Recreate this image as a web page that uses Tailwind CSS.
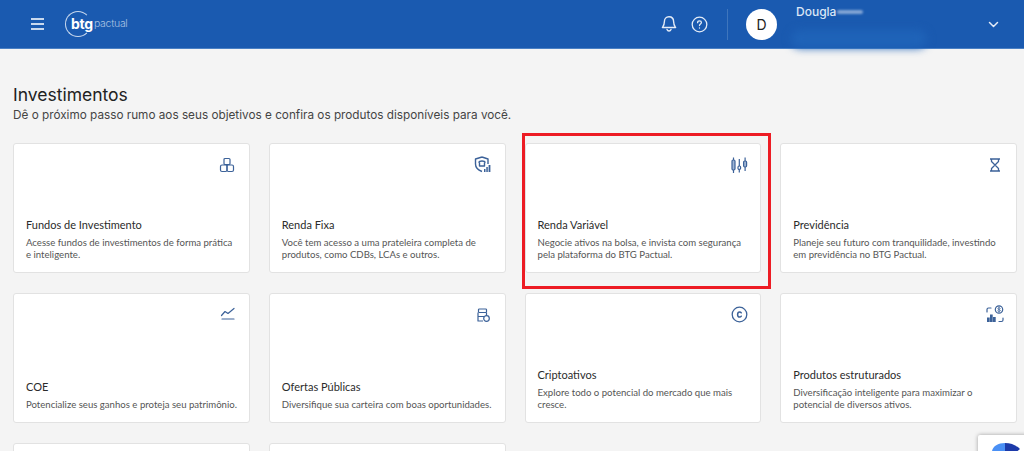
<!DOCTYPE html>
<html lang="pt-br">
<head>
  <meta charset="UTF-8" />
  <meta name="viewport" content="width=device-width, initial-scale=1.0" />
  <title>Investimentos</title>
  <script src="https://cdn.jsdelivr.net/npm/@tailwindcss/browser@4"></script>
</head>
<body class="bg-[#f4f4f4] font-['Inter',sans-serif]">
<div class="relative h-[451px] overflow-hidden">
  <!-- topo -->
  <header class="flex h-[49px] items-center border-b border-[#4a80c4] bg-[#1a5ab0] text-white">
    <button class="ml-[31px] flex w-[13px] flex-col gap-[3px]">
      <span class="h-[2px] w-[13px] bg-[#c9d9ee]"></span>
      <span class="h-[2px] w-[13px] bg-[#c9d9ee]"></span>
      <span class="h-[2px] w-[13px] bg-[#c9d9ee]"></span>
    </button>
    <div class="relative ml-[21px] flex h-[26px] w-[66px] items-center">
      <span class="size-[26px] rounded-full border border-l-[#c9d9ee] border-t-[#c9d9ee] border-b-[#c9d9ee] border-r-transparent"></span>
      <span class="absolute left-[6px] top-[4px] text-[14px] font-bold leading-[18px] tracking-[-0.3px]">btg</span>
      <span class="absolute left-[29px] top-[5px] text-[10.500px] font-light leading-[16px] tracking-[-0.3px] text-[#a9c2e2]">pactual</span>
    </div>
    <div class="ml-auto flex items-center">
      <svg class="size-[18px]" viewBox="0 0 18 18" fill="none" stroke="#e4ecf7" stroke-width="1.400" stroke-linecap="round" stroke-linejoin="round">
        <path d="M9 1.800c-3 0-4.600 2.200-4.600 4.800 0 3.400-1.300 4.800-2 5.900h13.200c-.7-1.100-2-2.500-2-5.900 0-2.600-1.600-4.800-4.600-4.800z"/>
        <path d="M7 14.500c.4 1 1.100 1.500 2 1.500s1.600-.5 2-1.500"/>
      </svg>
      <svg class="ml-[13px] size-[17px]" viewBox="0 0 17 17" fill="none" stroke="#e4ecf7" stroke-width="1.300" stroke-linecap="round">
        <circle cx="8.500" cy="8.500" r="7.300"/>
        <path d="M6.600 6.700c0-1.100.9-1.800 1.900-1.800s1.900.7 1.900 1.700c0 1.400-1.900 1.500-1.900 2.900"/>
        <path d="M8.500 12v.1"/>
      </svg>
      <span class="ml-[19px] h-[31px] w-px bg-[#3f76bd]"></span>
      <span class="ml-[18px] flex size-[31px] items-center justify-center rounded-full bg-white text-[14px] text-[#222]">D</span>
      <div class="relative ml-[19px] h-[48px] w-[131px] self-start">
        <span class="absolute left-0 top-[3px] text-[12px] font-medium leading-[17px] text-[#dbe6f5]">Dougla</span>
        <span class="absolute left-[41px] top-[10px] h-[4px] w-[26px] rounded-full bg-[#c9d9ee]/60 blur-[1px]"></span>
        <span class="absolute left-[-5px] top-[30px] h-[18px] w-[136px] rounded-full bg-[#1f63b8] blur-[4px]"></span>
      </div>
      <svg class="ml-[61px] mr-[25px] size-[11px]" viewBox="0 0 11 11" fill="none" stroke="#e4ecf7" stroke-width="1.500" stroke-linecap="round" stroke-linejoin="round">
        <path d="M1.500 3.500 5.500 7.500 9.500 3.500"/>
      </svg>
    </div>
  </header>

  <main class="pl-[13px] pr-[7px] pt-[35px]">
    <h1 class="text-[17.500px] leading-[22px] text-[#222]">Investimentos</h1>
    <p class="mt-[1px] text-[11.750px] leading-[16px] text-[#444]">Dê o próximo passo rumo aos seus objetivos e confira os produtos disponíveis para você.</p>

    <div class="mt-[20px] grid grid-cols-4 gap-x-[19px] gap-y-[20px] font-['Lato',sans-serif]">
      <!-- linha 1 -->
      <a class="flex h-[130px] flex-col rounded-[3px] border border-[#e2e2e2] bg-white px-[12px] pb-[11px]">
        <svg class="ml-auto mr-[2px] mt-[13px] size-[16px]" viewBox="0 0 16 16" fill="none" stroke="#3c6299" stroke-width="1.200" stroke-linejoin="round">
          <rect x="5" y="1.500" width="6" height="6" rx="1"/>
          <rect x="1.500" y="8" width="6.500" height="6.500" rx="1.500"/>
          <rect x="8" y="8" width="6.500" height="6.500" rx="1.500"/>
        </svg>
        <h2 class="mt-auto text-[11px] leading-[16px] text-[#2b2b2b]">Fundos de Investimento</h2>
        <p class="mt-[4px] text-[9.600px] leading-[12px] text-[#555]">Acesse fundos de investimentos de forma prática e inteligente.</p>
      </a>
      <a class="flex h-[130px] flex-col rounded-[3px] border border-[#e2e2e2] bg-white px-[12px] pb-[11px]">
        <svg class="ml-auto mr-[2px] mt-[12px] size-[17px]" viewBox="0 0 17 17" fill="none" stroke="#3c6299" stroke-width="1.400" stroke-linejoin="round">
          <path d="M8 1 14 3v5M8 1 1.500 3v5c0 3.500 2.500 6 6.500 7.500"/>
          <path d="M4.500 6.500c1-2 6-2 7 0M5.500 6.500v3.500h5v-3.500"/>
          <path fill="#3c6299" stroke="none" d="M10 13h1.500v3H10zM12.300 11h1.500v5h-1.500zM14.600 9H16.400v7h-1.800z"/>
        </svg>
        <h2 class="mt-auto text-[11px] leading-[16px] text-[#2b2b2b]">Renda Fixa</h2>
        <p class="mt-[4px] text-[9.600px] leading-[12px] text-[#555]">Você tem acesso a uma prateleira completa de produtos, como CDBs, LCAs e outros.</p>
      </a>
      <a class="flex h-[130px] flex-col rounded-[3px] border border-[#e2e2e2] bg-white px-[12px] pb-[11px]">
        <svg class="ml-auto mt-[13px] size-[17px]" viewBox="0 0 17 17" fill="none" stroke="#3c6299" stroke-width="1.200">
          <rect x="1" y="3" width="3" height="10" rx="1.200" fill="#9db4d4"/>
          <path d="M2.500 .5v2.500M2.500 13v3"/>
          <rect x="7" y="9" width="2.600" height="3.400" rx="1.200"/>
          <path d="M8.300 2v7M8.300 12.400v3"/>
          <rect x="12.600" y="4" width="3" height="6" rx="1.200" fill="#9db4d4"/>
          <path d="M14.100 .5v3.500M14.100 10v4"/>
        </svg>
        <h2 class="mt-auto text-[11px] leading-[16px] text-[#2b2b2b]">Renda Variável</h2>
        <p class="mt-[4px] text-[9.600px] leading-[12px] text-[#555]">Negocie ativos na bolsa, e invista com segurança pela plataforma do BTG Pactual.</p>
      </a>
      <a class="flex h-[130px] flex-col rounded-[3px] border border-[#e2e2e2] bg-white px-[12px] pb-[11px]">
        <svg class="ml-auto mr-[2px] mt-[14px] size-[14px]" viewBox="0 0 14 14" fill="none" stroke="#3c6299" stroke-width="1.300" stroke-linejoin="round">
          <path d="M2 1h10M2 13h10"/>
          <path d="M3.500 1v2.500L7 7l3.500-3.500V1M3.500 13v-2.500L7 7l3.500 3.500V13"/>
        </svg>
        <h2 class="mt-auto text-[11px] leading-[16px] text-[#2b2b2b]">Previdência</h2>
        <p class="mt-[4px] text-[9.600px] leading-[12px] text-[#555]">Planeje seu futuro com tranquilidade, investindo em previdência no BTG Pactual.</p>
      </a>

      <!-- linha 2 -->
      <a class="flex h-[130px] flex-col rounded-[3px] border border-[#e2e2e2] bg-white px-[12px] pb-[11px]">
        <svg class="ml-auto mr-[1px] mt-[12px] size-[16px]" viewBox="0 0 16 16" fill="none" stroke="#3c6299" stroke-width="1.200" stroke-linecap="round" stroke-linejoin="round">
          <path d="M1.500 9.500 5 5.500 8 7.500 14 2.500"/>
          <path d="M2 13h12"/>
        </svg>
        <h2 class="mt-auto text-[11px] leading-[16px] text-[#2b2b2b]">COE</h2>
        <p class="mt-[4px] whitespace-nowrap text-[9.600px] leading-[12px] text-[#555]">Potencialize seus ganhos e proteja seu patrimônio.</p>
      </a>
      <a class="flex h-[130px] flex-col rounded-[3px] border border-[#e2e2e2] bg-white px-[12px] pb-[11px]">
        <svg class="ml-auto mr-[3px] mt-[14px] size-[14px]" viewBox="0 0 14 14" fill="none" stroke="#3c6299" stroke-width="1.200" stroke-linejoin="round">
          <rect x="2.500" y="1" width="8" height="3.500" rx=".8"/>
          <path d="M2 4.500v8.500h5M2 8.500h6M10.500 4.500v3"/>
          <circle cx="10.500" cy="10.500" r="2.800"/>
        </svg>
        <h2 class="mt-auto text-[11px] leading-[16px] text-[#2b2b2b]">Ofertas Públicas</h2>
        <p class="mt-[4px] text-[9.600px] leading-[12px] text-[#555]">Diversifique sua carteira com boas oportunidades.</p>
      </a>
      <a class="flex h-[130px] flex-col rounded-[3px] border border-[#e2e2e2] bg-white px-[12px] pb-[11px]">
        <svg class="ml-auto mt-[12px] size-[17px]" viewBox="0 0 17 17" fill="none" stroke="#3c6299" stroke-width="1.300" stroke-linecap="round">
          <circle cx="8.500" cy="8.500" r="7.300"/>
          <path stroke-width="1.500" d="M10.300 6.800c-.4-.6-1-.9-1.700-.9-1.300 0-2 1.100-2 2.600s.7 2.600 2 2.600c.7 0 1.300-.3 1.700-.9"/>
        </svg>
        <h2 class="mt-auto text-[11px] leading-[16px] text-[#2b2b2b]">Criptoativos</h2>
        <p class="mt-[4px] text-[9.600px] leading-[12px] text-[#555]">Explore todo o potencial do mercado que mais cresce.</p>
      </a>
      <a class="flex h-[130px] flex-col rounded-[3px] border border-[#e2e2e2] bg-white px-[12px] pb-[11px]">
        <svg class="ml-auto mt-[11px] size-[18px]" viewBox="0 0 18 18" fill="none" stroke="#3c6299" stroke-width="1.200" stroke-linecap="round">
          <path d="M1 7V4.500C1 3.500 1.500 3 2.500 3H5M17 13v2c0 1-.5 1.500-1.500 1.500H13"/>
          <circle cx="13" cy="4.500" r="3.700"/>
          <path d="M14.300 3.300c-.8-.8-2.500-.6-2.500.4 0 1.200 2.600.6 2.600 1.800 0 1-1.800 1.200-2.700.4M13 1.800v5.400" stroke-width=".8"/>
          <path fill="#3c6299" stroke="none" d="M1 12.500h2.700v4.500H1zM4 9.500h2.700V17H4zM7 12h2.700v5H7z"/>
        </svg>
        <h2 class="mt-auto text-[11px] leading-[16px] text-[#2b2b2b]">Produtos estruturados</h2>
        <p class="mt-[4px] text-[9.600px] leading-[12px] text-[#555]">Diversificação inteligente para maximizar o potencial de diversos ativos.</p>
      </a>

      <!-- linha 3, cortada pela janela -->
      <a class="h-[130px] rounded-[3px] border border-[#e2e2e2] bg-white"></a>
      <a class="h-[130px] rounded-[3px] border border-[#e2e2e2] bg-white"></a>
    </div>
  </main>

  <!-- destaque vermelho -->
  <div class="absolute left-[522px] top-[133px] h-[156px] w-[249px] border-[3px] border-[#ed1c24]"></div>

  <!-- selo recaptcha -->
  <div class="absolute left-[978px] top-[435px] h-[30px] w-[60px] rounded-tl-[2px] bg-white pl-[14px] pt-[8px] shadow-[0_0_4px_rgba(0,0,0,0.35)]">
    <svg class="size-[30px]" viewBox="0 0 30 30">
      <path fill="#4a90f5" d="M0 8C1 3 6 0 13 0v12H0z"/>
      <path fill="#1c3aa9" d="M13 0c6 0 11 2 15 6l-6 5-9 1z"/>
    </svg>
  </div>
</div>
</body>
</html>
